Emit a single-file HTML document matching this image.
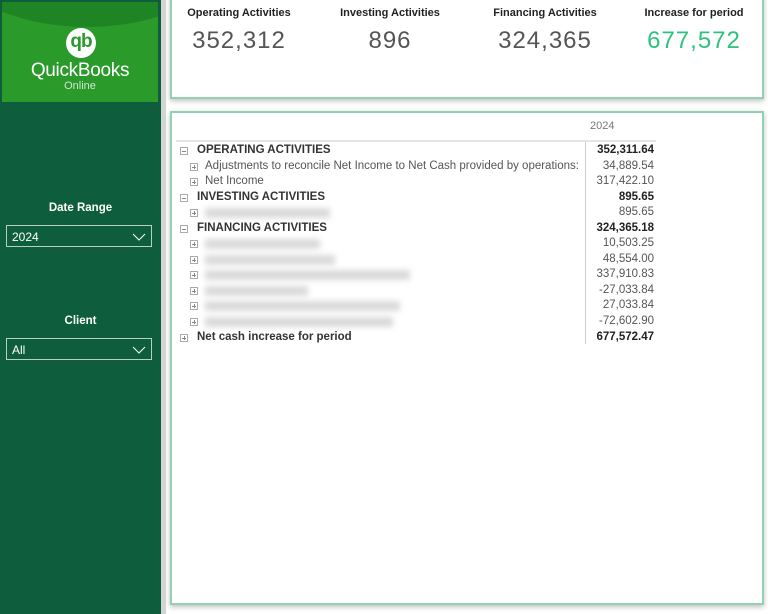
<!DOCTYPE html>
<html><head><meta charset="utf-8"><style>
*{margin:0;padding:0;box-sizing:border-box}
body{width:768px;height:614px;overflow:hidden;background:#fff;font-family:"Liberation Sans",sans-serif;position:relative}
.side{position:absolute;left:0;top:0;width:161px;height:614px;background:#0e5d3c}
.gut{position:absolute;left:161px;top:0;width:5px;height:614px;background:#d4d4d4}
.logo{position:absolute;left:2px;top:2px;width:156px;height:100px;background:#2a9a2a;overflow:hidden}
.logo .arc{position:absolute;left:-80px;top:-190px;width:330px;height:215px;border-radius:50%;background:#1f8424}
.lbl{position:absolute;width:161px;text-align:center;color:#fff;font-weight:bold;font-size:11.5px}
.dd{position:absolute;left:6px;width:146px;height:22px;border:1px solid #b8d0c4;color:#fff;font-size:12px;padding:4px 0 0 5px}
.dd svg{position:absolute;right:5px;top:7px}
.card{position:absolute;left:170px;width:594px;border:2px solid #8fd1b2;background:#fff;box-shadow:0 2px 5px rgba(0,0,0,.25)}
.kl{position:absolute;top:5px;font-size:11px;font-weight:bold;color:#222;text-align:center;width:140px}
.kv{position:absolute;top:29px;font-size:24px;color:#555;text-align:center;width:140px;letter-spacing:1px}
.row{position:absolute;left:0;height:15px;font-size:11.5px;color:#555;white-space:nowrap}
.b{font-weight:bold;color:#333}
.v{position:absolute;right:112px;font-size:11.5px;color:#555;text-align:right}
.vb{font-weight:bold;color:#222}
.ic{position:absolute;width:8px;height:8px;border:1px solid #aaa;top:4px}
.ic:before{content:"";position:absolute;left:1px;top:3px;width:4px;height:1px;background:#888}
.ic.p:after{content:"";position:absolute;left:3px;top:1px;width:1px;height:4px;background:#888}
.blur{position:absolute;height:10px;background:#dadada;filter:blur(3px);top:3px}
</style></head><body>
<div class="side">
 <div class="logo"><div class="arc"></div>
  <div style="position:absolute;left:64px;top:26px;width:30px;height:30px;border-radius:50%;background:#fff;color:#2a9a2a;font-size:19px;font-weight:bold;text-align:center;line-height:28px;letter-spacing:-1px">qb</div>
  <div style="position:absolute;left:0;width:156px;top:58px;text-align:center;color:#fff;font-size:19px;letter-spacing:-0.3px">QuickBooks</div>
  <div style="position:absolute;left:0;width:156px;top:78px;text-align:center;color:#cfe8cf;font-size:11px">Online</div>
 </div>
 <div class="lbl" style="top:202px">Date Range</div>
 <div class="dd" style="top:225px">2024<svg width="14" height="8"><path d="M1 1L7 7L13 1" stroke="#fff" fill="none"/></svg></div>
 <div class="lbl" style="top:315px">Client</div>
 <div class="dd" style="top:338px">All<svg width="14" height="8"><path d="M1 1L7 7L13 1" stroke="#fff" fill="none"/></svg></div>
</div>
<div class="gut"></div>
<div class="card" style="top:-4px;height:103px">
 <div class="kl" style="left:-3px;top:9px">Operating Activities</div>
 <div class="kv" style="left:-3px">352,312</div>
 <div class="kl" style="left:148px;top:9px">Investing Activities</div>
 <div class="kv" style="left:148px">896</div>
 <div class="kl" style="left:303px;top:9px">Financing Activities</div>
 <div class="kv" style="left:303px">324,365</div>
 <div class="kl" style="left:452px;top:9px">Increase for period</div>
 <div class="kv" style="left:452px;color:#2ec27e">677,572</div>
</div>
<div class="card" style="top:111px;height:494px">
 <div style="position:absolute;left:418px;top:7px;font-size:11px;color:#777">2024</div>
 <div style="position:absolute;left:4px;top:27px;width:480px;height:2px;background:#e4e4e4"></div>
 <div style="position:absolute;left:413px;top:29px;width:1px;height:202px;background:#ccc"></div>
 <div style="position:absolute;left:0;top:30px;width:594px">
  <div class="row" style="top:0"><span class="ic" style="left:8px"></span><span class="b" style="position:absolute;left:25px;top:1px">OPERATING ACTIVITIES</span></div><div class="v vb" style="top:1px">352,311.64</div>
  <div class="row" style="top:16px"><span class="ic p" style="left:18px"></span><span style="position:absolute;left:33px;top:1px">Adjustments to reconcile Net Income to Net Cash provided by operations:</span></div><div class="v" style="top:17px">34,889.54</div>
  <div class="row" style="top:31px"><span class="ic p" style="left:18px"></span><span style="position:absolute;left:33px;top:1px">Net Income</span></div><div class="v" style="top:32px">317,422.10</div>
  <div class="row" style="top:47px"><span class="ic" style="left:8px"></span><span class="b" style="position:absolute;left:25px;top:1px">INVESTING ACTIVITIES</span></div><div class="v vb" style="top:48px">895.65</div>
  <div class="row" style="top:62px"><span class="ic p" style="left:18px"></span><span class="blur" style="left:33px;width:125px"></span></div><div class="v" style="top:63px">895.65</div>
  <div class="row" style="top:78px"><span class="ic" style="left:8px"></span><span class="b" style="position:absolute;left:25px;top:1px">FINANCING ACTIVITIES</span></div><div class="v vb" style="top:79px">324,365.18</div>
  <div class="row" style="top:93px"><span class="ic p" style="left:18px"></span><span class="blur" style="left:33px;width:115px"></span></div><div class="v" style="top:94px">10,503.25</div>
  <div class="row" style="top:109px"><span class="ic p" style="left:18px"></span><span class="blur" style="left:33px;width:130px"></span></div><div class="v" style="top:110px">48,554.00</div>
  <div class="row" style="top:124px"><span class="ic p" style="left:18px"></span><span class="blur" style="left:33px;width:205px"></span></div><div class="v" style="top:125px">337,910.83</div>
  <div class="row" style="top:140px"><span class="ic p" style="left:18px"></span><span class="blur" style="left:33px;width:103px"></span></div><div class="v" style="top:141px">-27,033.84</div>
  <div class="row" style="top:155px"><span class="ic p" style="left:18px"></span><span class="blur" style="left:33px;width:195px"></span></div><div class="v" style="top:156px">27,033.84</div>
  <div class="row" style="top:171px"><span class="ic p" style="left:18px"></span><span class="blur" style="left:33px;width:188px"></span></div><div class="v" style="top:172px">-72,602.90</div>
  <div class="row" style="top:187px"><span class="ic p" style="left:8px"></span><span class="b" style="position:absolute;left:25px;top:1px">Net cash increase for period</span></div><div class="v vb" style="top:188px">677,572.47</div>
 </div>
</div>
</body></html>
